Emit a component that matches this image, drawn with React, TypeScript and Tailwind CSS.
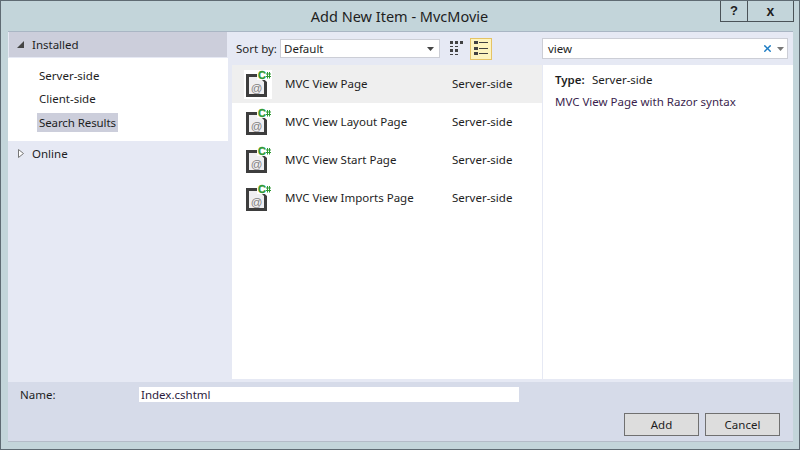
import { X } from "lucide-react";

const items = [
  { name: "MVC View Page", selected: true },
  { name: "MVC View Layout Page" },
  { name: "MVC View Start Page" },
  { name: "MVC View Imports Page" },
];

function RazorIcon() {
  return (
    <svg width="28" height="29" viewBox="0 0 28 29" className="shrink-0">
      <rect width="28" height="29" fill="#ffffff" />
      <path d="M2 4h12l9 8v15H2z" fill="#3d3d3d" />
      <path d="M5 7h10l5 5v12H5z" fill="#f0eff1" />
      <text x="12.5" y="21.5" textAnchor="middle" fontSize="11.5" fontFamily="Liberation Sans, sans-serif" fill="#808080">@</text>
      <rect x="13" y="0" width="14" height="10" fill="#ffffff" />
      <text x="14" y="9" fontSize="11" fontWeight="700" stroke="#2f9a34" strokeWidth="0.4" fontFamily="Liberation Sans, sans-serif" fill="#2f9a34">C</text>
      <path d="M22 4h5M22 6.5h5M23.5 2v6.5M25.5 2v6.5" stroke="#2f9a34" strokeWidth="1" />
    </svg>
  );
}

function GridIcon() {
  return (
    <svg width="14" height="15" viewBox="0 0 14 15" fill="#424242">
      <path d="M0 0h3v3H0zM5 0h3v3H5zM10 0h3v3h-3zM0 5h3v1H0zM5 5h3v1H5zM0 8h3v3H0zM5 8h3v3H5zM0 13h3v1H0zM5 13h3v1H5z" />
    </svg>
  );
}

function ListIcon() {
  return (
    <svg width="14" height="15" viewBox="0 0 14 15" fill="#424242">
      <path d="M0 0h4v3H0zM0 6h4v3H0zM0 11h4v3H0zM5 1h9v1H5zM5 7h9v1H5zM5 12h9v1H5z" />
    </svg>
  );
}

export default function App() {
  return (
    <div className="flex h-[450px] w-[800px] flex-col overflow-hidden border border-[#5f6b73] bg-[#c3d5da] font-['Noto_Sans',sans-serif] text-[11.5px] text-[#1e1e1e]">
      <div className="flex h-[30px] shrink-0 items-start">
        <div className="flex-1 pt-[5px] pl-[78px] text-center text-[14.5px] leading-[20px]">Add New Item - MvcMovie</div>
        <div className="mr-[5px] flex h-[21px] border-x border-b border-[#4b5358]">
          <div className="flex w-[27px] items-center justify-center border-r border-[#4b5358] font-['Liberation_Sans',sans-serif] text-[13px] font-bold">?</div>
          <div className="flex w-[45px] items-center justify-center font-['Liberation_Sans',sans-serif] text-[14px] font-bold">x</div>
        </div>
      </div>

      <div className="ml-[7px] mr-[6px] flex flex-1 flex-col border-t border-[#a9b6c4] bg-[#e6e9f4]">
        <div className="flex min-h-0 flex-1">
          <div className="w-[220px] shrink-0">
            <div className="mx-[1px] mb-[1px] flex h-[25px] items-center gap-[8px] bg-[#cccedb] pl-[8px]">
              <svg width="7" height="7" viewBox="0 0 7 7"><path d="M7 0v7H0z" fill="#444444" /></svg>
              <span className="text-[#1e1e1e]">Installed</span>
            </div>
            <div className="flex h-[83px] flex-col items-start gap-[5px] bg-white pt-[9px] pl-[29px]">
              <div className="px-[2px] leading-[18px]">Server-side</div>
              <div className="px-[2px] leading-[18px]">Client-side</div>
              <div className="bg-[#cccedb] px-[2px] leading-[19px] tracking-[-0.1px]">Search Results</div>
            </div>
            <div className="flex h-[25px] items-center gap-[8px] pl-[10px]">
              <svg width="6" height="9" viewBox="0 0 6 9"><path d="M.5.5l5 4-5 4z" fill="#ffffff" stroke="#777777" /></svg>
              <span>Online</span>
            </div>
          </div>

          <div className="ml-[4px] flex w-[310px] shrink-0 flex-col">
            <div className="flex h-[33px] items-center pl-[4px]">
              <span className="w-[44px]">Sort by:</span>
              <div className="flex h-[19px] w-[160px] items-center justify-between border border-[#ccced6] bg-white pr-[5px] pl-[3px]">
                <span>Default</span>
                <svg width="7" height="4" viewBox="0 0 7 4"><path d="M0 0h7L3.5 4z" fill="#444444" /></svg>
              </div>
              <div className="ml-[10px] flex h-[18px] w-[14px] items-center justify-center"><GridIcon /></div>
              <div className="ml-[6px] flex h-[22px] w-[22px] items-center justify-center border border-[#e5c365] bg-[#fdf4bf]"><ListIcon /></div>
            </div>
            <div className="flex-1 bg-white">
              {items.map((item) => (
                <div key={item.name} className={`flex h-[38px] items-center pl-[12px] ${item.selected ? "bg-[#efefef]" : ""}`}>
                  <RazorIcon />
                  <span className="ml-[13px] w-[167px]">{item.name}</span>
                  <span>Server-side</span>
                </div>
              ))}
            </div>
          </div>

          <div className="flex flex-1 flex-col">
            <div className="flex h-[33px] items-center pr-[5px]">
              <div className="flex h-[21px] w-full items-center border border-[#ccced6] bg-white pl-[5px]">
                <span className="flex-1">view</span>
                <X className="mr-[4px] h-[11px] w-[11px] text-[#1c7cc4]" strokeWidth={3} />
                <svg className="mr-[3px]" width="7" height="4" viewBox="0 0 7 4"><path d="M0 0h7L3.5 4z" fill="#777777" /></svg>
              </div>
            </div>
            <div className="flex-1 border-l border-[#e6e9f4] bg-white pt-[6px] pl-[12px]">
              <div className="flex leading-[18px]"><span className="w-[37px] font-semibold">Type:</span><span>Server-side</span></div>
              <div className="mt-[4px] leading-[18px] text-[#3b1f4e]">MVC View Page with Razor syntax</div>
            </div>
          </div>
        </div>
        <div className="h-[3px] shrink-0" />
        <div className="h-[60px] shrink-0 border-b border-[#b4bcc8] bg-[#d6dbe9] pr-[13px] pl-[12px]">
          <div className="mt-[5px] flex h-[15px] items-center">
            <span className="w-[119px]">Name:</span>
            <div className="flex h-[15px] w-[380px] items-center bg-white pl-[2px] text-[#2b1a3d]">Index.cshtml</div>
          </div>
          <div className="mt-[11px] flex justify-end gap-[6px]">
            <div className="flex h-[23px] w-[75px] items-center justify-center border border-[#707070] bg-[#dddddd]">Add</div>
            <div className="flex h-[23px] w-[75px] items-center justify-center border border-[#707070] bg-[#dddddd]">Cancel</div>
          </div>
        </div>
      </div>
      <div className="h-[7px] shrink-0" />
    </div>
  );
}
